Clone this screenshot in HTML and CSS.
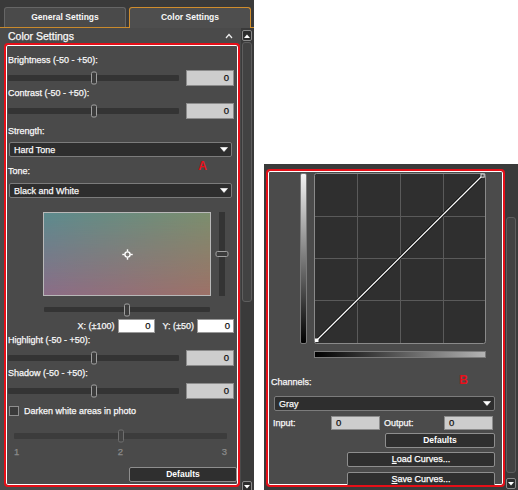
FILE: index.html
```html
<!DOCTYPE html>
<html lang="en">
<head>
  <meta charset="UTF-8" />
  <meta name="viewport" content="width=device-width, initial-scale=1.0"/>
  <title>Color Settings</title>
  <link rel="stylesheet" href="styles.css">
</head>
<body>
  <!-- Panel A: color settings tab -->
  <div class="panel panel-a">
    <div class="tabs">
      <div class="tab">General Settings</div>
      <div class="tab active">Color Settings</div>
    </div>
    <div class="panel-body">
      <div class="content">
        <div class="section-head">
          <span>Color Settings</span>
          <svg class="caret" width="8" height="6" viewBox="0 0 8 6"><polyline points="1,5 4,1.5 7,5"/></svg>
        </div>
        <div class="outline outline-a">
          <div class="label">Brightness (-50 - +50):</div>
          <div class="slider-row">
            <div class="track"><span class="thumb"></span></div>
            <div class="num">0</div>
          </div>
          <div class="label">Contrast (-50 - +50):</div>
          <div class="slider-row">
            <div class="track"><span class="thumb"></span></div>
            <div class="num">0</div>
          </div>
          <div class="label strength">Strength:</div>
          <div class="select select-strength">
            <span>Hard Tone</span>
            <svg class="arrow" width="8" height="5" viewBox="0 0 8 5"><polygon points="0.5,0.5 7.5,0.5 4,4.5"/></svg>
          </div>
          <div class="label tone">
            <span>Tone:</span>
            <span class="mark mark-a">A</span>
          </div>
          <div class="select select-tone">
            <span>Black and White</span>
            <svg class="arrow" width="8" height="5" viewBox="0 0 8 5"><polygon points="0.5,0.5 7.5,0.5 4,4.5"/></svg>
          </div>
          <div class="color-row">
            <div class="color-pad">
              <svg class="crosshair" width="11" height="11" viewBox="0 0 11 11">
                <circle cx="5.5" cy="5.5" r="2.6"/>
                <line x1="5.5" y1="0.3" x2="5.5" y2="2.6"/>
                <line x1="5.5" y1="8.4" x2="5.5" y2="10.7"/>
                <line x1="0.3" y1="5.5" x2="2.6" y2="5.5"/>
                <line x1="8.4" y1="5.5" x2="10.7" y2="5.5"/>
              </svg>
            </div>
            <div class="v-track"><span class="v-thumb"></span></div>
          </div>
          <div class="track h-slider"><span class="thumb"></span></div>
          <div class="xy-row">
            <span>X: (±100)</span>
            <div class="num white">0</div>
            <span class="y-label">Y: (±50)</span>
            <div class="num white">0</div>
          </div>
          <div class="label highlight">Highlight (-50 - +50):</div>
          <div class="slider-row">
            <div class="track"><span class="thumb"></span></div>
            <div class="num">0</div>
          </div>
          <div class="label">Shadow (-50 - +50):</div>
          <div class="slider-row">
            <div class="track"><span class="thumb"></span></div>
            <div class="num">0</div>
          </div>
          <div class="check-row">
            <span class="checkbox"></span>
            <span>Darken white areas in photo</span>
          </div>
          <div class="track dim-slider"><span class="thumb"></span></div>
          <div class="scale"><span>1</span><span>2</span><span>3</span></div>
          <div class="btn btn-defaults-a">Defaults</div>
        </div>
      </div>
      <div class="scrollbar">
        <div class="sb-btn">
          <svg width="6" height="4" viewBox="0 0 6 4"><polygon points="0,4 6,4 3,0.5"/></svg>
        </div>
        <div class="sb-thumb thumb-a"></div>
        <div class="sb-btn sb-down-a">
          <svg width="6" height="4" viewBox="0 0 6 4"><polygon points="0,0 6,0 3,3.5"/></svg>
        </div>
      </div>
    </div>
  </div>

  <!-- Panel B: tone curve -->
  <div class="panel panel-b">
    <div class="outline outline-b">
      <div class="curve-row">
        <div class="v-bar"></div>
        <svg class="curve" width="172" height="171" viewBox="0 0 172 171">
          <rect x="0.5" y="0.5" width="171" height="170" rx="2" fill="#2f2f2f" stroke="#8a8a8a"/>
          <g stroke="#5a5a5a">
            <line x1="43.5" y1="1" x2="43.5" y2="170"/>
            <line x1="86.5" y1="1" x2="86.5" y2="170"/>
            <line x1="129.5" y1="1" x2="129.5" y2="170"/>
            <line x1="1" y1="43.5" x2="171" y2="43.5"/>
            <line x1="1" y1="85.5" x2="171" y2="85.5"/>
            <line x1="1" y1="127.5" x2="171" y2="127.5"/>
          </g>
          <line x1="2.5" y1="167.5" x2="168.5" y2="2.5" stroke="#111" stroke-width="3"/>
          <line x1="2.5" y1="167.5" x2="168.5" y2="2.5" stroke="#fff" stroke-width="1.2"/>
          <rect x="1" y="165.5" width="3.5" height="3.5" fill="#fff"/>
          <rect x="167" y="1" width="3.2" height="3.2" fill="#444" stroke="#e0e0e0"/>
        </svg>
      </div>
      <div class="h-bar"></div>
      <div class="label channels">
        <span>Channels:</span>
        <span class="mark mark-b">B</span>
      </div>
      <div class="select select-b">
        <span>Gray</span>
        <svg class="arrow" width="8" height="5" viewBox="0 0 8 5"><polygon points="0.5,0.5 7.5,0.5 4,4.5"/></svg>
      </div>
      <div class="io-row">
        <span class="io-label">Input:</span>
        <div class="num left">0</div>
        <span class="io-label out">Output:</span>
        <div class="num left">0</div>
      </div>
      <div class="btn btn-defaults-b">Defaults</div>
      <div class="btn btn-curves btn-load"><u>L</u>oad Curves...</div>
      <div class="btn btn-curves btn-save"><u>S</u>ave Curves...</div>
    </div>
    <div class="scrollbar scrollbar-b">
      <div class="sb-thumb thumb-b"></div>
      <div class="sb-btn sb-down-b">
        <svg width="6" height="4" viewBox="0 0 6 4"><polygon points="0,0 6,0 3,3.5"/></svg>
      </div>
    </div>
  </div>
</body>
</html>
```

FILE: styles.css
```css
body {
  margin: 0;
  background-color: #fff;
  font-family: "Liberation Sans", Arial, sans-serif;
  font-size: 9px;
  color: #f8f8f8;
  -webkit-text-stroke: 0.25px currentColor;
  display: flex;
  align-items: flex-start;
}

.panel {
  background-color: #3a3a3a;
  overflow: hidden;
}

/* ---- panel A ---- */
.panel-a {
  width: 254px;
  height: 490px;
}

.tabs {
  display: flex;
  gap: 3px;
  height: 20px;
  padding: 7px 0 0 4px;
  border-bottom: 1px solid #c98a2c;
}

.tab {
  width: 122px;
  height: 20px;
  box-sizing: border-box;
  border: 1px solid #666;
  border-bottom: none;
  border-radius: 3px 3px 0 0;
  background-color: #4a4a4a;
  font-size: 8.5px;
  font-weight: bold;
  line-height: 19px;
  text-align: center;
  -webkit-text-stroke: 0;
}

.tab.active {
  height: 21px;
  margin-bottom: -1px;
  border-color: #d08d2d;
  background-color: #4e4e4e;
}

.panel-body {
  display: flex;
  height: 462px;
}

.content {
  width: 241px;
  background-color: #4a4a4a;
}

.section-head {
  display: flex;
  align-items: center;
  justify-content: space-between;
  height: 15px;
  padding: 0 8px 0 8px;
  font-size: 10.5px;
}

.caret polyline {
  fill: none;
  stroke: #eee;
  stroke-width: 1.2;
}

.outline {
  box-sizing: border-box;
  border: 2px solid #e60f18;
  border-radius: 4px;
  box-shadow: inset 0 0 0 1px #fff;
}

.outline-a {
  width: 236px;
  height: 444px;
  margin-left: 4px;
  padding: 9px 4px 0 2px;
}

.label {
  height: 12px;
  line-height: 12px;
  white-space: nowrap;
}

.slider-row + .label { margin-top: 1px; }
.label.strength { margin-top: 6px; }
.label.tone { margin-top: 8px; }
.label.highlight { margin-top: 1px; }

.label.tone,
.label.channels {
  display: flex;
}

.mark {
  margin-left: auto;
  color: #e8101a;
  font-weight: bold;
  font-size: 12px;
  -webkit-text-stroke: 0;
}

.mark-a {
  margin-right: 27px;
  transform: translateY(-5px);
}

.mark-b {
  margin-right: 35px;
  transform: translateY(-2px);
}

.slider-row {
  display: flex;
  align-items: center;
  justify-content: space-between;
  height: 16px;
  margin-top: 4px;
}

.track {
  position: relative;
  width: 171px;
  height: 6px;
  background-color: #343434;
  border-radius: 1px;
}

.thumb {
  position: absolute;
  left: 50%;
  top: 50%;
  width: 6px;
  height: 13px;
  box-sizing: border-box;
  transform: translate(-50%, -50%);
  border: 1px solid #a0a0a0;
  border-radius: 2px;
  background-color: #3c3c3c;
}

.num {
  width: 48px;
  height: 16px;
  box-sizing: border-box;
  padding-right: 4px;
  border: 1px solid #8c8c8c;
  background-color: #cdcdcd;
  color: #111;
  font-size: 9.5px;
  line-height: 14px;
  text-align: right;
}

.select {
  display: flex;
  align-items: center;
  justify-content: space-between;
  height: 15px;
  box-sizing: border-box;
  padding: 0 3px 0 4px;
  border: 1px solid #7c7c7c;
  border-radius: 2px;
  background-color: #2e2e2e;
}

.select-strength {
  width: 223px;
  margin: 5px 0 0 1px;
}

.select-tone {
  width: 223px;
  margin: 6px 0 0 1px;
}

.arrow polygon {
  fill: #fff;
  stroke: #fff;
  stroke-width: 0.6;
  stroke-linejoin: round;
}

.color-row {
  display: flex;
  margin: 14px 0 0 35px;
}

.color-pad {
  position: relative;
  display: flex;
  align-items: center;
  justify-content: center;
  width: 168px;
  height: 84px;
  box-sizing: border-box;
  border: 1px solid #b8b8b8;
  background: linear-gradient(to right, #5d8b8e, #7c8e6e);
}

.color-pad::before {
  content: "";
  position: absolute;
  inset: 0;
  background: linear-gradient(to right, #8b6d87, #9d7167);
  -webkit-mask-image: linear-gradient(to bottom, transparent, #000);
  mask-image: linear-gradient(to bottom, transparent, #000);
}

.crosshair {
  position: relative;
  fill: none;
  stroke: #fff;
  stroke-width: 1.4;
}

.v-track {
  position: relative;
  width: 6px;
  height: 84px;
  margin-left: 8px;
  background-color: #343434;
}

.v-thumb {
  position: absolute;
  left: 50%;
  top: 50%;
  width: 13px;
  height: 6px;
  box-sizing: border-box;
  transform: translate(-50%, -50%);
  border: 1px solid #a0a0a0;
  border-radius: 2px;
  background-color: #3c3c3c;
}

.h-slider {
  width: 166px;
  height: 5px;
  margin: 11px 0 0 36px;
}

.xy-row {
  display: flex;
  align-items: center;
  justify-content: flex-end;
  height: 14px;
  margin-top: 7px;
}

.num.white {
  width: 37px;
  height: 14px;
  margin-left: 3px;
  padding-right: 3px;
  line-height: 12px;
  background-color: #fff;
  border-color: #999;
}

.y-label {
  margin-left: 8px;
}

.check-row {
  display: flex;
  align-items: center;
  height: 14px;
  margin-top: 5px;
}

.checkbox {
  width: 10px;
  height: 10px;
  box-sizing: border-box;
  margin: 0 5px 0 1px;
  border: 1px solid #8e8e8e;
  background-color: #3a3a3a;
}

.dim-slider {
  width: 213px;
  margin: 15px 0 0 6px;
  background-color: #3c3c3c;
}

.dim-slider .thumb {
  border-color: #6e6e6e;
  background-color: #444;
}

.scale {
  display: flex;
  justify-content: space-between;
  width: 213px;
  height: 12px;
  margin: 7px 0 0 6px;
  line-height: 12px;
  color: #8a8a8a;
  font-size: 9.5px;
}

.btn {
  height: 15px;
  box-sizing: border-box;
  border: 1px solid #8e8e8e;
  border-radius: 2px;
  background-color: #2f2f2f;
  color: #fff;
  font-size: 8.5px;
  font-weight: bold;
  line-height: 13px;
  text-align: center;
  -webkit-text-stroke: 0;
}

.btn-defaults-a {
  width: 108px;
  margin: 9px 0 0 121px;
}

/* ---- scrollbars ---- */
.scrollbar {
  display: flex;
  flex-direction: column;
  width: 11px;
  margin-left: 1px;
}

.sb-btn {
  display: flex;
  align-items: center;
  justify-content: center;
  width: 10px;
  height: 11px;
  box-sizing: border-box;
  border: 1px solid #8a8a8a;
  border-radius: 2px;
  background-color: #2c2c2c;
}

.sb-btn polygon {
  fill: #fff;
}

.sb-btn:first-child {
  margin-top: 2px;
}

.sb-thumb {
  width: 10px;
  box-sizing: border-box;
  border: 1px solid #5e5e5e;
  border-radius: 3px;
  background-color: #424242;
}

.thumb-a {
  height: 260px;
  margin-top: 1px;
}

.sb-down-a {
  margin-top: auto;
  margin-bottom: -2px;
}

/* ---- panel B ---- */
.panel-b {
  display: flex;
  width: 254px;
  height: 326px;
  margin: 164px 0 0 10px;
}

.outline-b {
  width: 239px;
  height: 318px;
  margin: 5px 0 0 2px;
  padding-top: 2px;
  overflow: hidden;
  background-color: #4b4b4b;
}

.curve-row {
  display: flex;
  margin-left: 32px;
}

.v-bar {
  width: 7px;
  height: 171px;
  box-sizing: border-box;
  margin-right: 7px;
  border: 1px solid #7a7a7a;
  border-radius: 2px;
  background: linear-gradient(to bottom, #f4f4f4, #000);
}

.h-bar {
  width: 172px;
  height: 7px;
  box-sizing: border-box;
  margin: 7px 0 0 46px;
  border: 1px solid #7a7a7a;
  background: linear-gradient(to right, #000, #b4b4b4);
}

.label.channels {
  margin: 18px 0 0 3px;
}

.select-b {
  width: 221px;
  margin: 8px 0 0 6px;
}

.io-row {
  display: flex;
  align-items: center;
  height: 14px;
  margin: 5px 0 0 5px;
}

.io-label {
  width: 58px;
}

.io-label.out {
  width: 60px;
  margin-left: 4px;
}

.num.left {
  width: 49px;
  height: 14px;
  line-height: 12px;
  padding: 0 0 0 4px;
  text-align: left;
}

.btn-defaults-b {
  width: 110px;
  margin: 3px 0 0 117px;
}

.btn-curves {
  width: 148px;
  margin-left: 79px;
  font-size: 9px;
  font-weight: normal;
  -webkit-text-stroke: 0.25px currentColor;
}

.btn-load { margin-top: 4px; }
.btn-save { margin-top: 5px; }

.scrollbar-b .sb-btn:first-child {
  margin-top: 0;
}

.thumb-b {
  height: 256px;
  margin-top: 53px;
}

.sb-down-b {
  margin-top: 5px;
}
```
